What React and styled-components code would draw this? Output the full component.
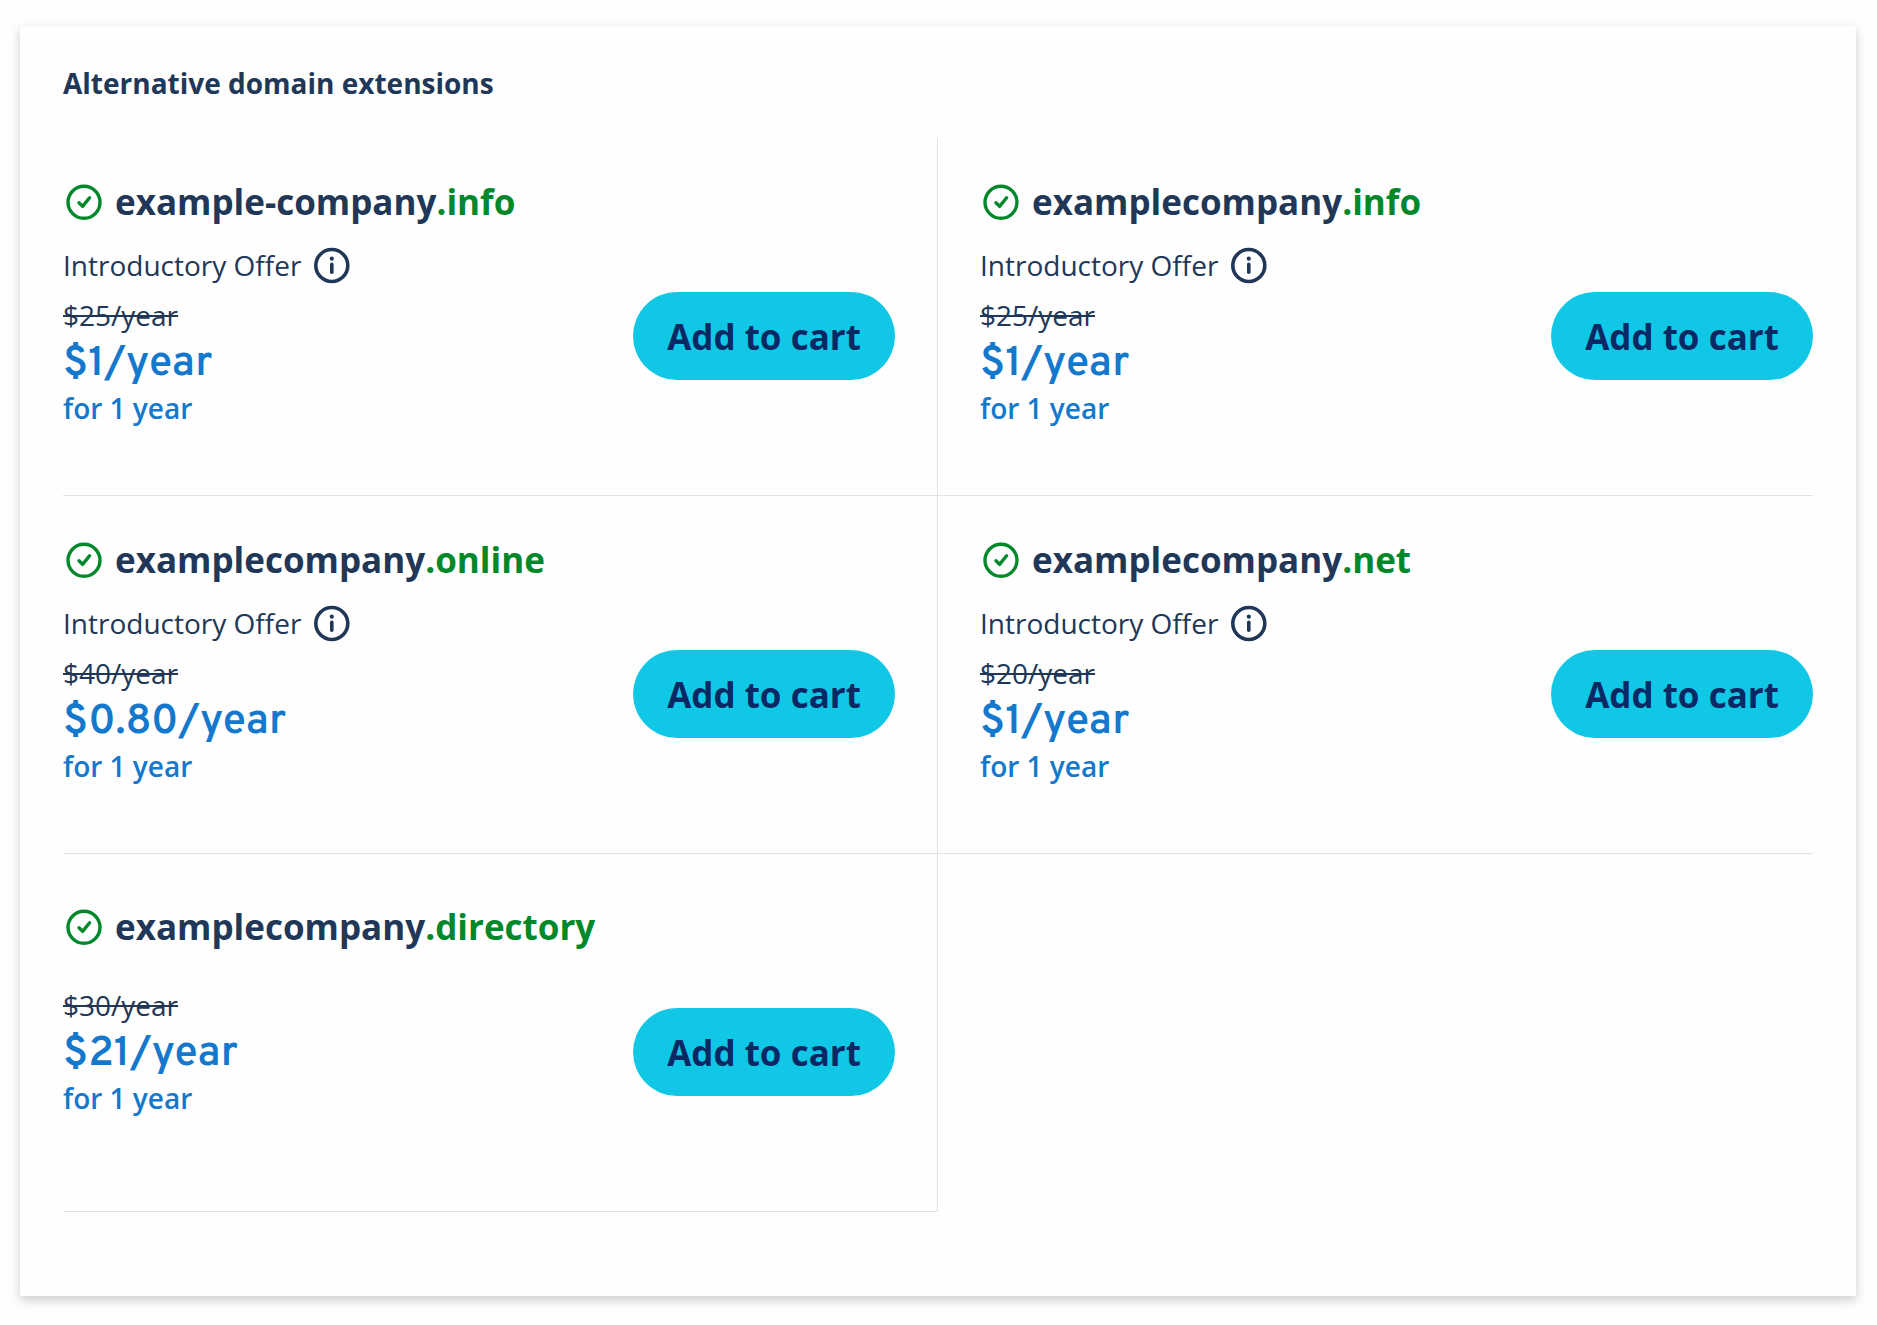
import React from "react";
import styled, { createGlobalStyle } from "styled-components";

const domains = [
  { name: "example-company", tld: ".info", oldPrice: "$25", price: "$1", intro: true },
  { name: "examplecompany", tld: ".info", oldPrice: "$25", price: "$1", intro: true },
  { name: "examplecompany", tld: ".online", oldPrice: "$40", price: "$0.80", intro: true },
  { name: "examplecompany", tld: ".net", oldPrice: "$20", price: "$1", intro: true },
  { name: "examplecompany", tld: ".directory", oldPrice: "$30", price: "$21", intro: false },
];

const CheckIcon = () => (
  <Icon viewBox="0 0 43 43" aria-hidden="true">
    <circle cx="21" cy="22.3" r="16" strokeWidth="3.4" />
    <path d="M16 22.8l3.6 3.6 7-8.6" strokeWidth="3.4" />
  </Icon>
);

const InfoIcon = () => (
  <Icon viewBox="0 0 43 43" aria-hidden="true">
    <circle cx="21.8" cy="21.5" r="16" strokeWidth="3.6" />
    <path d="M21.8 20.3v8" strokeWidth="3.6" />
    <circle cx="21.8" cy="14.7" r="2.1" fill="currentColor" stroke="none" />
  </Icon>
);

const DomainTile = ({ domain }) => (
  <Tile>
    <Details>
      <DomainName $tall={!domain.intro}>
        <CheckIcon />
        <span>
          {domain.name}
          <Tld>{domain.tld}</Tld>
        </span>
      </DomainName>
      {domain.intro && (
        <Offer>
          Introductory Offer
          <InfoButton type="button" aria-label="About the introductory offer">
            <InfoIcon />
          </InfoButton>
        </Offer>
      )}
      <Prices>
        <OldPrice>{domain.oldPrice}/year</OldPrice>
        <Price>{domain.price}/year</Price>
        <Term>for 1 year</Term>
      </Prices>
    </Details>
    <CartButton type="button">Add to cart</CartButton>
  </Tile>
);

const App = () => {
  return (
    <>
      <GlobalStyle />
      <Card>
        <Title>Alternative domain extensions</Title>
        <Grid>
          {domains.map((domain) => (
            <DomainTile key={domain.name + domain.tld} domain={domain} />
          ))}
        </Grid>
      </Card>
    </>
  );
};

const GlobalStyle = createGlobalStyle`
  * {
    box-sizing: border-box;
  }

  body {
    margin: 0;
    background-color: #fefefe;
    color: #213757;
    font-family: "Open Sans", "Noto Sans", sans-serif;
  }
`;

const Card = styled.section`
  margin: 26px 21px 26px 20px;
  padding: 38px 43px 84px;
  background-color: #fefefe;
  box-shadow: 0 4px 10px rgba(0, 0, 0, 0.2);
`;

const Title = styled.h2`
  margin: 0 0 36px;
  font-size: 28px;
  line-height: 38px;
  font-weight: 700;
`;

const Grid = styled.div`
  display: grid;
  grid-template-columns: repeat(2, 1fr);
`;

const Tile = styled.article`
  display: flex;
  justify-content: space-between;
  align-items: center;
  min-height: 358px;
  border-bottom: 1px solid #e1e2e6;

  &:nth-child(odd) {
    padding-right: 42px;
    border-right: 1px solid #e1e2e6;
  }

  &:nth-child(even) {
    padding-left: 42px;
  }
`;

const Details = styled.div`
  align-self: flex-start;
  padding-top: 42px;
`;

const DomainName = styled.h3`
  display: flex;
  align-items: center;
  gap: 9px;
  min-height: ${(props) => (props.$tall ? "60px" : "43px")};
  margin: 0 0 21px;
  font-size: 35px;
  line-height: 43px;
  font-weight: 700;

  svg {
    color: #00882b;
  }
`;

const Tld = styled.span`
  color: #00882b;
`;

const Icon = styled.svg`
  display: block;
  flex: none;
  width: 43px;
  height: 43px;
  fill: none;
  stroke: currentColor;
  stroke-linecap: round;
  stroke-linejoin: round;
`;

const Offer = styled.div`
  display: flex;
  align-items: center;
  gap: 9px;
  font-size: 28px;
  line-height: 43px;
`;

const InfoButton = styled.button`
  padding: 0;
  border: none;
  background: none;
  color: inherit;
  cursor: pointer;
`;

const Prices = styled.div`
  display: flex;
  flex-direction: column;
  align-items: flex-start;
  padding-top: 9px;
`;

const OldPrice = styled.s`
  font-size: 28px;
  line-height: 38px;
`;

const Price = styled.strong`
  padding-top: 7px;
  color: #1478cc;
  font-family: Overpass, Roboto, sans-serif;
  font-size: 42px;
  line-height: 48px;
  font-weight: 600;
`;

const Term = styled.span`
  color: #1478cc;
  font-size: 28px;
  line-height: 38px;
  font-weight: 600;
`;

const CartButton = styled.button`
  flex: none;
  min-width: 262px;
  margin-top: 38px;
  padding: 23px 32px 21px;
  border: none;
  border-radius: 44px;
  background-color: #11c7e6;
  color: #0a2864;
  font-family: inherit;
  font-size: 35px;
  line-height: 44px;
  font-weight: 700;
  cursor: pointer;
`;

export default App;
